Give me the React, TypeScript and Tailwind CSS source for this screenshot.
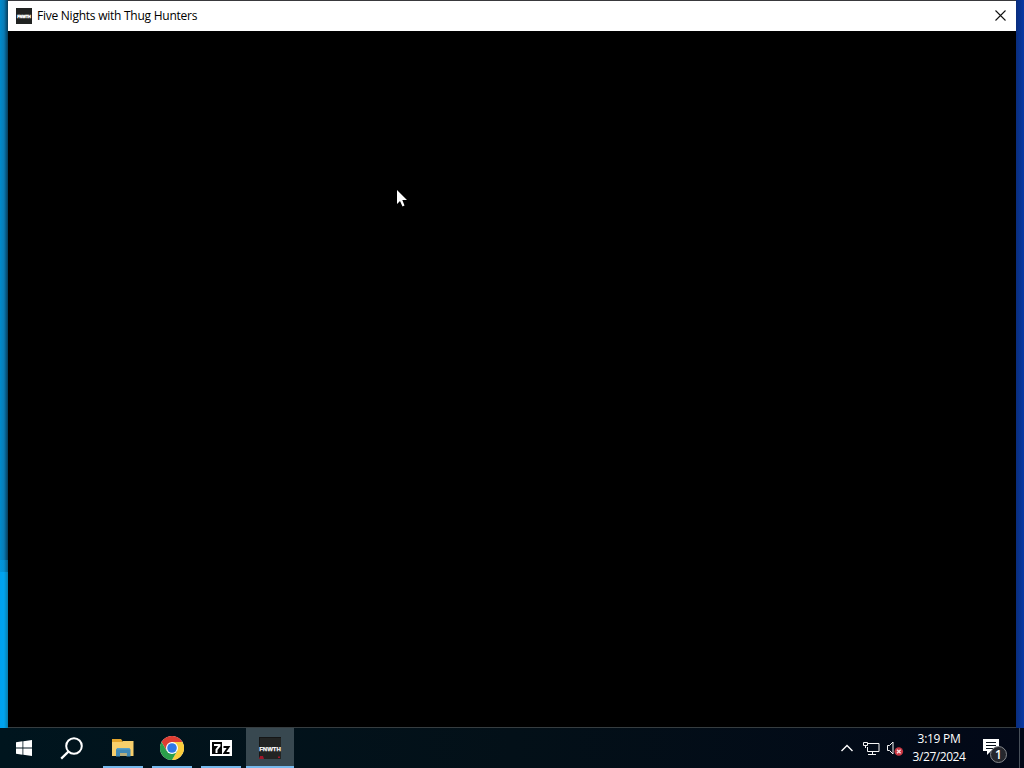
import type { ReactNode } from "react";

const FONT = "font-['Open_Sans','Noto_Sans',sans-serif]";

function GameIcon() {
  return (
    <svg width="24" height="24" viewBox="0 0 24 24">
      <rect x="1" y="1" width="22" height="22" fill="#222423" />
      <path d="M1 1.5h22M1.5 1v22" stroke="#151616" />
      <path d="M2 20h3l1 3H1zM20 20.500h2v1.500h-2z" fill="#a3172b" />
      <text x="12" y="14.6" textAnchor="middle" fontSize="6" fontWeight="700" fill="#f8f8f8" stroke="#f8f8f8" strokeWidth=".25" fontFamily="Liberation Sans, sans-serif">
        FNWTH
      </text>
    </svg>
  );
}

function SmallGameIcon() {
  return (
    <svg width="16" height="16" viewBox="0 0 16 16">
      <rect width="16" height="16" fill="#202221" />
      <text x="8" y="9.5" textAnchor="middle" fontSize="3.800" fontWeight="700" fill="#fff" stroke="#fff" strokeWidth=".35" fontFamily="Liberation Sans, sans-serif">
        FNWTH
      </text>
    </svg>
  );
}

function WindowsIcon() {
  return (
    <svg width="16" height="16" viewBox="0 0 16 16" fill="#fff">
      <path d="M0 2.2 6.5 1.3v6.2H0zM7.3 1.2 16 0v7.5H7.3zM0 8.4h6.5v6.3L0 13.8zM7.3 8.4H16V16l-8.7-1.2z" />
    </svg>
  );
}

function SearchIcon() {
  return (
    <svg width="24" height="24" viewBox="0 0 24 24" fill="none" stroke="#fff" strokeWidth="2">
      <circle cx="14" cy="10" r="7.8" />
      <path d="M8.4 15.6 1.2 22.6" strokeWidth="2.2" />
    </svg>
  );
}

function FolderIcon() {
  return (
    <svg width="22" height="18" viewBox="0 0 22 18">
      <path d="M0 0h9l1.5 2v4H0z" fill="#e4a52c" />
      <path d="M0 3h10l1-1h10.5v15H0z" fill="#f8cf6b" />
      <path d="M4 17.500v-7L5.500 9h11.500l1.500 1.500v7h-4V14H8v3.500z" fill="#4089b5" />
      <path d="M5.500 9h11.500l1.500 1.500H4z" fill="#58a0c9" />
      <path d="M8 14h6.500v3H8z" fill="#b6ad7c" />
    </svg>
  );
}

function ChromeIcon() {
  return (
    <svg width="24" height="24" viewBox="0 0 24 24">
      <circle cx="12" cy="12" r="12" fill="#fff" />
      <path d="M12 6h10.4A12 12 0 0 0 1.6 6l5.2 9z" fill="#de3d32" />
      <path d="M17.2 15 12 24A12 12 0 0 0 22.4 6H12z" fill="#fccd3c" />
      <path d="M6.8 15 1.6 6A12 12 0 0 0 12 24l5.2-9z" fill="#2b9f4b" />
      <circle cx="12" cy="12" r="6" fill="#fff" />
      <circle cx="12" cy="12" r="4.8" fill="#2f78e6" />
    </svg>
  );
}

function SevenZipIcon() {
  return (
    <svg width="22" height="16" viewBox="0 0 22 16">
      <rect width="22" height="16" fill="#fff" />
      <rect x="2" y="2" width="10" height="12" fill="#050505" />
      <path d="M4 5h5.500v1L6.500 9.500V13" fill="none" stroke="#fff" strokeWidth="2" />
      <path d="M13.500 7h5L14.500 13h5" fill="none" stroke="#050505" strokeWidth="2" />
    </svg>
  );
}

function NetworkIcon() {
  return (
    <svg width="17" height="15" viewBox="0 0 17 15" fill="none" stroke="#f5f5f5">
      <path d="M5 2.500h11v8H4.500V6M9.500 10.500v3M5 13.500h8" />
      <path d="M.5 1.500h4v3h-4zM2.500 5v2" />
    </svg>
  );
}

function VolumeIcon() {
  return (
    <svg width="17" height="15" viewBox="0 0 17 15" fill="none">
      <path d="M.5 4.500h2L6 1v12L2.500 9.500h-2z" stroke="#f5f5f5" />
      <circle cx="11.800" cy="10.500" r="4.300" fill="#c93743" />
      <path d="m10 8.700 3.600 3.600m0-3.600L10 12.300" stroke="#ffe1e1" strokeWidth="1.300" />
    </svg>
  );
}

function NotificationIcon() {
  return (
    <svg width="25" height="25" viewBox="0 0 25 25">
      <path d="M0 0h16v12H8l-4 4v-4H0z" fill="#fff" />
      <path d="M3 3.500h10M3 6.500h10M3 9.500h7" stroke="#07101b" />
      <circle cx="15.500" cy="15.500" r="8" fill="#25272d" stroke="#85888c" />
      <text x="15.500" y="20" textAnchor="middle" fontSize="12" fontWeight="600" fill="#fff" fontFamily="Open Sans, sans-serif">
        1
      </text>
    </svg>
  );
}

function TaskButton({ children, className = "" }: { children: ReactNode; className?: string }) {
  return <div className={`flex h-full items-center justify-center ${className}`}>{children}</div>;
}

function TitleBar() {
  return (
    <header className="flex h-[31px] items-center border-t border-[#39393d] bg-white pl-2 text-black">
      <div className="pb-px">
        <SmallGameIcon />
      </div>
      <span className="ml-[5px] flex-1 text-xs tracking-[-0.25px] whitespace-nowrap">Five Nights with Thug Hunters</span>
      <button aria-label="Close" className="flex h-full w-[31px] items-center justify-center pb-0.5">
        <svg width="11" height="11" viewBox="0 0 11 11" stroke="#111" strokeWidth="1.1">
          <path d="m.5.5 10 10m0-10-10 10" />
        </svg>
      </button>
    </header>
  );
}

function Taskbar() {
  return (
    <footer className="flex h-10 bg-linear-to-r from-[#00151e] via-[#031018] to-[#020817] text-white">
      <TaskButton className="w-12">
        <WindowsIcon />
      </TaskButton>
      <TaskButton className="w-12">
        <SearchIcon />
      </TaskButton>
      <TaskButton className="ml-[7px] w-10 border-b-2 border-[#76b9ed] pt-0.5">
        <FolderIcon />
      </TaskButton>
      <TaskButton className="ml-[9px] w-10 border-b-2 border-[#76b9ed] pt-0.5">
        <ChromeIcon />
      </TaskButton>
      <TaskButton className="ml-[9px] w-10 border-b-2 border-[#76b9ed] pt-0.5">
        <SevenZipIcon />
      </TaskButton>
      <TaskButton className="ml-[5px] w-12 border-b-2 border-[#76b9ed] bg-[#384850] pt-0.5">
        <GameIcon />
      </TaskButton>
      <div className="ml-auto flex h-full items-center">
        <svg width="12" height="8" viewBox="0 0 12 8" fill="none" stroke="#fff" strokeWidth="1.4">
          <path d="m.5 7 5.500-5.500L11.500 7" />
        </svg>
        <div className="ml-[10px]">
          <NetworkIcon />
        </div>
        <div className="ml-[7px]">
          <VolumeIcon />
        </div>
        <div className="ml-1 flex w-[62px] flex-col items-center pb-px text-xs leading-[18px] whitespace-nowrap">
          <span className="tracking-[-0.3px]">3:19 PM</span>
          <span className="tracking-[-0.45px]">3/27/2024</span>
        </div>
        <div className="mt-[7px] ml-[13px]">
          <NotificationIcon />
        </div>
        <div className="ml-[11px] h-full w-[5px] border-l border-[#48505a]" />
      </div>
    </footer>
  );
}

function Cursor() {
  return (
    <svg className="absolute top-[189px] left-[396px]" width="13" height="19" viewBox="0 0 13 19">
      <path d="M1 1v14l3-3 2.500 5.500 2-1L6.300 11H11z" fill="#fff" />
    </svg>
  );
}

export default function App() {
  return (
    <div className={`relative flex h-[768px] w-[1024px] flex-col overflow-hidden bg-black ${FONT}`}>
      <div className="flex min-h-0 flex-1">
        <div className="flex w-2 flex-col">
          <div className="h-[560px] bg-linear-to-r from-[#008bcd] via-[#087bb5] to-[#063c59]" />
          <div className="h-3 bg-linear-to-r from-[#0097de] via-[#0490d2] to-[#075c83]" />
          <div className="flex-1 bg-linear-to-r from-[#00a2ee] via-[#00a4ef] to-[#087dab]" />
        </div>
        <main className="flex flex-1 flex-col border-b border-[#363d40] bg-black">
          <TitleBar />
        </main>
        <div className="w-2 bg-linear-to-r from-[#092d7d] to-[#0739a5]" />
      </div>
      <Taskbar />
      <Cursor />
    </div>
  );
}
